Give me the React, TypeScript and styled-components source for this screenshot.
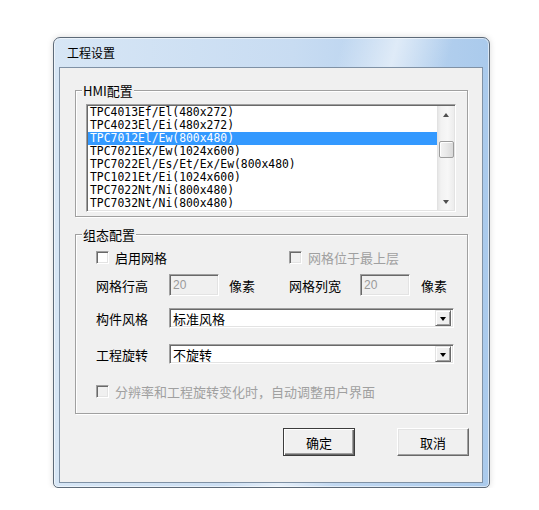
import React from "react";
import styled, { createGlobalStyle, css } from "styled-components";

const Global = createGlobalStyle`
  html, body { margin: 0; padding: 0; background: #ffffff; }
  body { font-family: "Noto Sans CJK SC", "Noto Sans", sans-serif; color: #000; }
  * { box-sizing: border-box; }
`;

const Page = styled.div`
  padding: 37px 0 0 53px;
`;

const Window = styled.div`
  width: 437px;
  height: 451px;
  border: 1px solid #5d6a78;
  border-radius: 7px 7px 5px 5px;
  padding: 0 6px 4px 5px;
  display: flex;
  flex-direction: column;
  background:
    linear-gradient(105deg, rgba(255,255,255,0) 52%, rgba(255,255,255,0.55) 62%, rgba(255,255,255,0) 72%),
    linear-gradient(90deg, #d7e6f5 0%, #c8dcf2 55%, #aacaec 100%);
  box-shadow: inset 0 0 0 1px rgba(255,255,255,0.55), 0 0 6px rgba(0,0,0,0.15);
`;

const TitleBar = styled.div`
  height: 29px;
  display: flex;
  align-items: center;
  padding: 1px 0 0 8px;
  font-size: 12px;
  line-height: 14px;
  color: #000;
`;

const Client = styled.div`
  height: 416px;
  border: 1px solid #7f91a5;
  background: #f0f0f0;
  display: flex;
  flex-direction: column;
  padding: 0 13px 0 15px;
`;

const Group = styled.div<{ $mt: number; $h: number }>`
  position: relative;
  width: 393px;
  height: ${(p) => p.$h}px;
  margin-top: ${(p) => p.$mt}px;
  border: 1px solid #a0a0a0;
  box-shadow: inset 1px 1px #ffffff, 1px 1px #ffffff;
`;

const Caption = styled.span`
  position: absolute;
  top: -8px;
  left: 6px;
  padding: 0 1px;
  background: #f0f0f0;
  font-size: 13px;
  line-height: 15px;
  height: 15px;
  white-space: nowrap;
`;

const ListArea = styled.div`
  padding: 13px 10px 0 10px;
`;

const ListBox = styled.div`
  width: 370px;
  height: 108px;
  border: 1px solid;
  border-color: #a0a0a0 #ffffff #ffffff #a0a0a0;
  box-shadow: inset 1px 1px #696969, inset -1px -1px #e3e3e3;
  background: #ffffff;
  padding: 1px;
  display: flex;
`;

const Items = styled.div`
  flex: 1;
  display: flex;
  flex-direction: column;
`;

const Item = styled.div<{ $selected?: boolean }>`
  height: 13px;
  line-height: 13px;
  padding-left: 2px;
  font-family: "DejaVu Sans Mono", "Liberation Mono", monospace;
  font-size: 11.4px;
  white-space: nowrap;
  color: #000;
  ${(p) =>
    p.$selected &&
    css`
      background: #3399ff;
      color: #ffffff;
    `}
`;

const ScrollBar = styled.div`
  width: 17px;
  display: flex;
  flex-direction: column;
  background: linear-gradient(90deg, #e6e6e6 0, #f2f2f2 3px, #f7f7f7 60%, #ececec 100%);
  border-left: 1px solid #e2e2e2;
`;

const ScrollButton = styled.div`
  height: 17px;
  display: flex;
  align-items: center;
  justify-content: center;
`;

const Arrow = styled.span<{ $dir: "up" | "down" }>`
  width: 0;
  height: 0;
  border-left: 3.5px solid transparent;
  border-right: 3.5px solid transparent;
  ${(p) =>
    p.$dir === "up"
      ? css`border-bottom: 4px solid #505050;`
      : css`border-top: 4px solid #505050;`}
`;

const Track = styled.div`
  flex: 1;
  display: flex;
  flex-direction: column;
  align-items: center;
`;

const Thumb = styled.div`
  width: 15px;
  height: 17px;
  border: 1px solid #9c9c9c;
  border-radius: 2px;
  background: linear-gradient(90deg, #f3f3f3 0%, #e8e8e8 50%, #d9d9d9 100%);
  box-shadow: inset 1px 1px rgba(255,255,255,0.9);
`;

const Form = styled.div`
  display: flex;
  flex-direction: column;
  padding-left: 20px;
`;

const Row = styled.div<{ $mt: number; $h: number }>`
  display: grid;
  grid-template-columns: 73px 50px 70px 71px 51px 43px;
  align-items: center;
  height: ${(p) => p.$h}px;
  margin-top: ${(p) => p.$mt}px;
`;

const Label = styled.span<{ $disabled?: boolean; $pl?: number; $span?: string }>`
  font-size: 13px;
  line-height: 15px;
  white-space: nowrap;
  color: ${(p) => (p.$disabled ? "#a0a0a0" : "#000")};
  padding-left: ${(p) => p.$pl ?? 0}px;
  grid-column: ${(p) => p.$span ?? "auto"};
`;

const CheckWrap = styled.label<{ $span: string }>`
  grid-column: ${(p) => p.$span};
  display: flex;
  align-items: center;
  gap: 6px;
`;

const CheckBox = styled.span<{ $disabled?: boolean }>`
  width: 13px;
  height: 13px;
  flex: none;
  border: 1px solid;
  border-color: #a0a0a0 #ffffff #ffffff #a0a0a0;
  box-shadow: inset 1px 1px #696969, inset -1px -1px #e3e3e3;
  background: ${(p) => (p.$disabled ? "#f0f0f0" : "#ffffff")};
`;

const Edit = styled.div`
  height: 22px;
  width: 50px;
  border: 1px solid;
  border-color: #a0a0a0 #ffffff #ffffff #a0a0a0;
  box-shadow: inset 1px 1px #696969, inset -1px -1px #e3e3e3;
  background: #f0f0f0;
  padding: 3px 0 0 3px;
  font-family: "Liberation Sans", Arial, sans-serif;
  font-size: 12px;
  line-height: 14px;
  color: #9a9a9a;
`;

const Combo = styled.div`
  grid-column: 2 / span 5;
  height: 20px;
  border: 1px solid;
  border-color: #a0a0a0 #ffffff #ffffff #a0a0a0;
  box-shadow: inset 1px 1px #696969, inset -1px -1px #e3e3e3;
  background: #ffffff;
  padding: 2px 2px 2px 3px;
  display: flex;
  align-items: center;
`;

const ComboText = styled.span`
  flex: 1;
  font-size: 13px;
  line-height: 15px;
  white-space: nowrap;
`;

const DropButton = styled.span`
  width: 16px;
  height: 16px;
  flex: none;
  background: #f0f0f0;
  border: 1px solid;
  border-color: #e3e3e3 #696969 #696969 #e3e3e3;
  box-shadow: inset 1px 1px #ffffff, inset -1px -1px #a0a0a0;
  display: flex;
  align-items: center;
  justify-content: center;
`;

const DropArrow = styled.span`
  width: 0;
  height: 0;
  border-left: 3.5px solid transparent;
  border-right: 3.5px solid transparent;
  border-top: 4px solid #000;
  margin-top: 1px;
`;

const ButtonBar = styled.div`
  display: flex;
  justify-content: flex-end;
  gap: 42px;
  margin-top: 14px;
`;

const Button = styled.button<{ $default?: boolean }>`
  width: 72px;
  height: 28px;
  margin: 0;
  padding: 0;
  font-family: "Noto Sans CJK SC", "Noto Sans", sans-serif;
  font-size: 13px;
  line-height: 15px;
  color: #000;
  background: #f0f0f0;
  border: 1px solid;
  border-color: #ffffff #696969 #696969 #ffffff;
  box-shadow: inset -1px -1px #a0a0a0, inset 1px 1px #e3e3e3;
  ${(p) =>
    p.$default &&
    css`
      border: 1px solid #3c3c3c;
      box-shadow: inset 1px 1px #ffffff, inset -1px -1px #696969, inset -2px -2px #a0a0a0;
    `}
`;

const models = [
  "TPC4013Ef/El(480x272)",
  "TPC4023El/Ei(480x272)",
  "TPC7012El/Ew(800x480)",
  "TPC7021Ex/Ew(1024x600)",
  "TPC7022El/Es/Et/Ex/Ew(800x480)",
  "TPC1021Et/Ei(1024x600)",
  "TPC7022Nt/Ni(800x480)",
  "TPC7032Nt/Ni(800x480)",
];
const selectedIndex = 2;
const thumbOffset = 18;

export default function App() {
  return (
    <>
      <Global />
      <Page>
        <Window>
          <TitleBar>工程设置</TitleBar>
          <Client>
            <Group $mt={22} $h={127}>
              <Caption>HMI配置</Caption>
              <ListArea>
                <ListBox>
                  <Items>
                    {models.map((m, i) => (
                      <Item key={m} $selected={i === selectedIndex}>
                        {m}
                      </Item>
                    ))}
                  </Items>
                  <ScrollBar>
                    <ScrollButton>
                      <Arrow $dir="up" />
                    </ScrollButton>
                    <Track>
                      <Thumb style={{ marginTop: thumbOffset }} />
                    </Track>
                    <ScrollButton>
                      <Arrow $dir="down" />
                    </ScrollButton>
                  </ScrollBar>
                </ListBox>
              </ListArea>
            </Group>

            <Group $mt={17} $h={180}>
              <Caption>组态配置</Caption>
              <Form>
                <Row $mt={14} $h={16}>
                  <CheckWrap $span="1 / span 3">
                    <CheckBox />
                    <Label>启用网格</Label>
                  </CheckWrap>
                  <CheckWrap $span="4 / span 3">
                    <CheckBox $disabled />
                    <Label $disabled>网格位于最上层</Label>
                  </CheckWrap>
                </Row>
                <Row $mt={9} $h={22}>
                  <Label>网格行高</Label>
                  <Edit>20</Edit>
                  <Label $pl={10}>像素</Label>
                  <Label>网格列宽</Label>
                  <Edit>20</Edit>
                  <Label $pl={10}>像素</Label>
                </Row>
                <Row $mt={12} $h={20}>
                  <Label>构件风格</Label>
                  <Combo>
                    <ComboText>标准风格</ComboText>
                    <DropButton>
                      <DropArrow />
                    </DropButton>
                  </Combo>
                </Row>
                <Row $mt={16} $h={20}>
                  <Label>工程旋转</Label>
                  <Combo>
                    <ComboText>不旋转</ComboText>
                    <DropButton>
                      <DropArrow />
                    </DropButton>
                  </Combo>
                </Row>
                <Row $mt={19} $h={16}>
                  <CheckWrap $span="1 / -1">
                    <CheckBox $disabled />
                    <Label $disabled>分辨率和工程旋转变化时，自动调整用户界面</Label>
                  </CheckWrap>
                </Row>
              </Form>
            </Group>

            <ButtonBar>
              <Button $default>确定</Button>
              <Button>取消</Button>
            </ButtonBar>
          </Client>
        </Window>
      </Page>
    </>
  );
}
